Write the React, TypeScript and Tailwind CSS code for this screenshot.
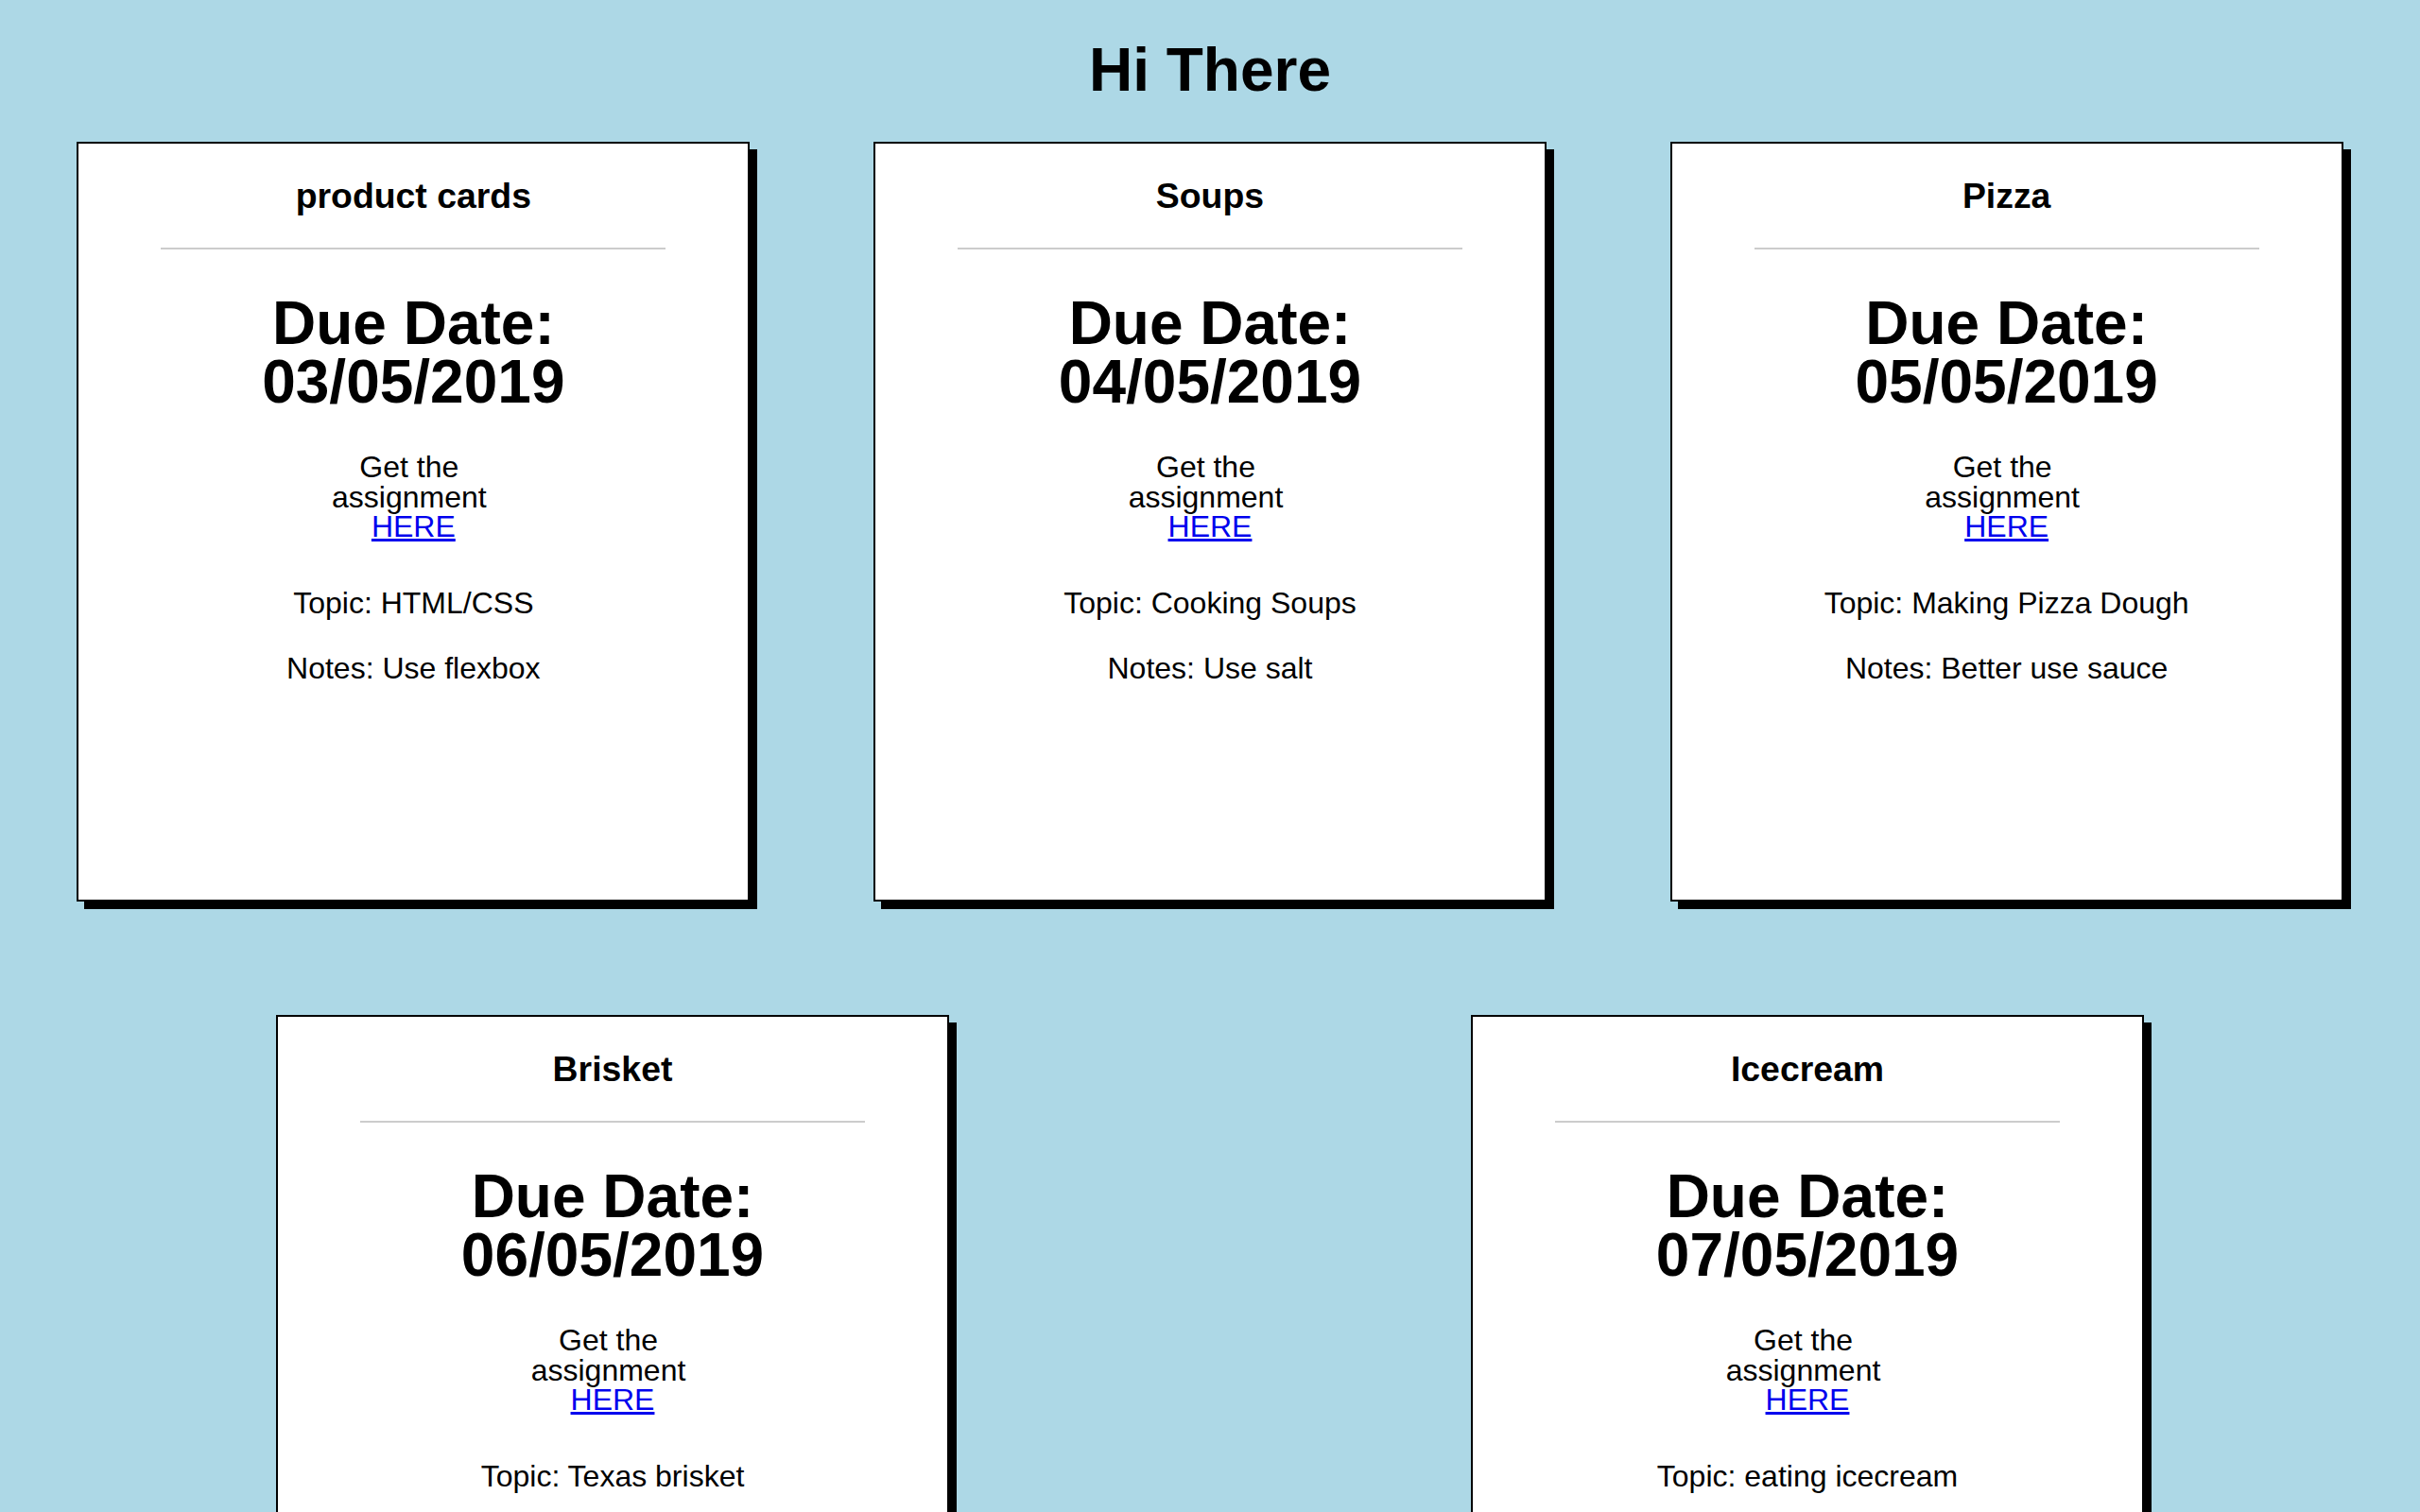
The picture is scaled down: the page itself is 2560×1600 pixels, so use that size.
type Assignment = {
  title: string;
  due: string;
  topic: string;
  notes: string;
};

const ASSIGNMENTS: Assignment[] = [
  { title: "product cards", due: "03/05/2019", topic: "HTML/CSS", notes: "Use flexbox" },
  { title: "Soups", due: "04/05/2019", topic: "Cooking Soups", notes: "Use salt" },
  { title: "Pizza", due: "05/05/2019", topic: "Making Pizza Dough", notes: "Better use sauce" },
  { title: "Brisket", due: "06/05/2019", topic: "Texas brisket", notes: "Low and slow" },
  { title: "Icecream", due: "07/05/2019", topic: "eating icecream", notes: "Keep it cold" },
];

function AssignmentCard({ title, due, topic, notes }: Assignment) {
  return (
    <article className="h-[804px] w-[712px] shrink-0 border-2 border-black bg-white pt-[33px] text-center shadow-[8px_8px_0_0_#000]">
      <h3 className="text-[37.4px] font-bold leading-[44px]">{title}</h3>
      <hr className="mx-auto mt-[33px] w-[534px] border-t-2 border-[#cccccc]" />
      <h2 className="mt-[47px] text-[64px] font-bold leading-[62px]">
        Due Date:
        <br />
        {due}
      </h2>
      {/* trailing spaces count toward centering in the original, hence the pr */}
      <p className="mt-[44px] text-[32px] leading-[31.5px]">
        <span className="block pr-[9px]">Get the</span>
        <span className="block pr-[9px]">assignment</span>
        <a href="#" className="text-[#0000ee] underline">
          HERE
        </a>
      </p>
      <p className="mt-[46px] text-[32px] leading-[36px]">Topic: {topic}</p>
      <p className="mt-[33px] text-[32px] leading-[36px]">Notes: {notes}</p>
    </article>
  );
}

export default function App() {
  return (
    <div className="min-h-screen bg-[#add8e6] font-['Liberation_Sans',Arial,sans-serif] text-black">
      <h1 className="pt-[37px] text-center text-[64px] font-bold leading-[74px]">Hi There</h1>
      <div className="mt-[39px] flex flex-wrap justify-around gap-y-[120px] px-4 pb-16">
        {ASSIGNMENTS.map((a) => (
          <AssignmentCard key={a.title} {...a} />
        ))}
      </div>
    </div>
  );
}
